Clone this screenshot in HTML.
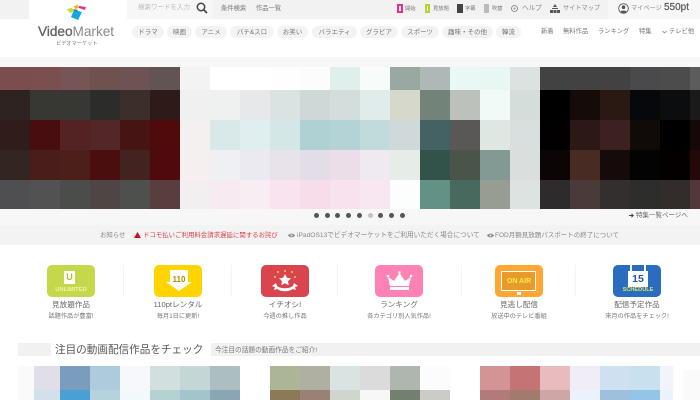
<!DOCTYPE html>
<html lang="ja"><head><meta charset="utf-8"><title>VideoMarket</title>
<style>
html,body{margin:0;padding:0;background:#fff}
body{width:700px;height:400px;overflow:hidden;position:relative;font-family:"Liberation Sans","Noto Sans CJK JP",sans-serif;color:#777}
.a{position:absolute}
.t{position:absolute;white-space:nowrap;line-height:12px;height:12px}
.c{transform:translateX(-50%)}
.p{position:absolute;top:26px;height:12px;line-height:13px;border-radius:6px;background:#f3f3f3;font-size:6.5px;text-align:center;color:#777;white-space:nowrap}
.tile{position:absolute;top:265px;width:48px;height:32px;border-radius:5px;overflow:hidden}
.div{position:absolute;top:265px;width:1px;height:32px;background:#f3f3f3}
.l1{font-size:7.6px;color:#666;top:299px}
.l2{font-size:6.2px;color:#777;top:311px}
.dot{position:absolute;top:213px;width:5px;height:5px;border-radius:50%;background:#555}
svg{display:block}
</style></head><body>

<div class="a" style="left:0;top:0;width:700px;height:19px;background:#f2f2f2"></div>
<div class="a" style="left:29px;top:0;width:98px;height:19px;background:#fff"></div>
<div class="a" style="left:127px;top:0;width:86px;height:19px;background:#f7f7f7"></div>
<div class="a" style="left:608px;top:0;width:92px;height:19px;background:#f7f7f7"></div>

<svg class="a" style="left:66px;top:4px" width="22" height="17" viewBox="0 0 22 17">
<path d="M1 5l5-1 2 3-4 2z" fill="#c9d92e"/><path d="M8 2l4-1 1 3-4 1z" fill="#f7a92b"/><path d="M13 2l7 1-1 3-6-2z" fill="#e8318a"/>
<path d="M8 6l8 2-4 8-7-3z" fill="#14a8e0"/><path d="M7 5l5 1-2 2z" fill="#0d8f8a"/></svg>
<div class="t" style="left:38px;top:25px;font-size:13.6px;line-height:14px;height:14px;color:#888"><span style="color:#666;-webkit-text-stroke:.35px #666">Video</span>Market</div>
<div class="t" style="left:56px;top:38px;font-size:5.2px;color:#777">ビデオマーケット</div>

<div class="t" style="left:138px;top:2px;font-size:6.5px;color:#bbb">検索ワードを入力</div>
<svg class="a" style="left:196px;top:2px" width="12" height="12" viewBox="0 0 12 12"><circle cx="5" cy="5" r="3.7" fill="none" stroke="#444" stroke-width="1.5"/><path d="M8 8l3 3" stroke="#444" stroke-width="1.7"/></svg>
<div class="t" style="left:221px;top:3px;font-size:6.3px;color:#777">条件検索</div>
<div class="t" style="left:256px;top:3px;font-size:6.3px;color:#777">作品一覧</div>

<div class="a" style="left:397px;top:4px;width:6px;height:9px;background:#ee2a8a"></div><div class="a" style="left:399px;top:6px;width:2px;height:5px;background:#fff"></div>
<div class="t" style="left:405px;top:3px;font-size:5.3px;color:#777">開始</div>
<div class="a" style="left:425px;top:4px;width:5px;height:9px;background:#b9d02e"></div><div class="a" style="left:427px;top:6px;width:1px;height:5px;background:#fff"></div>
<div class="t" style="left:433px;top:3px;font-size:5.3px;color:#777">見放題</div>
<div class="a" style="left:457px;top:4px;width:6px;height:9px;background:#444"></div>
<div class="t" style="left:465px;top:3px;font-size:5.3px;color:#777">字幕</div>
<div class="a" style="left:484px;top:4px;width:5px;height:9px;background:#bbb"></div>
<div class="t" style="left:492px;top:3px;font-size:5.3px;color:#777">吹替</div>
<svg class="a" style="left:511px;top:5px" width="7" height="7" viewBox="0 0 7 7"><circle cx="3.5" cy="3.5" r="3" fill="none" stroke="#777" stroke-width=".8"/><circle cx="3.5" cy="3.5" r="1" fill="#999"/></svg>
<div class="t" style="left:522px;top:3px;font-size:6.6px;color:#888">ヘルプ</div>
<svg class="a" style="left:550px;top:4px" width="10" height="9" viewBox="0 0 10 9"><path d="M5 0l2 3H3zM2 4h6v1H2zM0 6h3v3H0zM3.5 6h3v3h-3zM7 6h3v3H7z" fill="#555"/></svg>
<div class="t" style="left:563px;top:3px;font-size:6.2px;color:#888">サイトマップ</div>
<svg class="a" style="left:618px;top:3px" width="11" height="11" viewBox="0 0 11 11"><circle cx="5.5" cy="5.5" r="4.8" fill="none" stroke="#555" stroke-width=".9"/><circle cx="5.5" cy="4.2" r="1.8" fill="#555"/><path d="M2.3 9c.6-2 5.8-2 6.4 0-1.5 1.3-4.900 1.3-6.4 0z" fill="#555"/></svg>
<div class="t" style="left:631px;top:3px;font-size:6.2px;color:#888">マイページ</div>
<div class="t" style="left:664px;top:2px;font-size:10px;color:#555;-webkit-text-stroke:.2px #555">550pt</div>

<div class="p" style="left:132px;width:32px">ドラマ</div>
<div class="p" style="left:167px;width:25px">映画</div>
<div class="p" style="left:195px;width:32px">アニメ</div>
<div class="p" style="left:230px;width:44px">パチ&amp;スロ</div>
<div class="p" style="left:277px;width:31px">お笑い</div>
<div class="p" style="left:312px;width:45px">バラエティ</div>
<div class="p" style="left:360px;width:38px">グラビア</div>
<div class="p" style="left:401px;width:38px">スポーツ</div>
<div class="p" style="left:442px;width:51px">趣味・その他</div>
<div class="p" style="left:496px;width:25px">韓流</div>

<div class="t" style="left:541px;top:26px;font-size:6.3px;color:#777">新着</div>
<div class="t" style="left:563px;top:26px;font-size:6.3px;color:#777">無料作品</div>
<div class="t" style="left:598px;top:26px;font-size:6.3px;color:#777">ランキング</div>
<div class="t" style="left:639px;top:26px;font-size:6.3px;color:#777">特集</div>
<svg class="a" style="left:662px;top:30px" width="5" height="4" viewBox="0 0 5 4"><path d="M.5 1l2 2 2-2" fill="none" stroke="#777" stroke-width=".7"/></svg>
<div class="t" style="left:669px;top:26px;font-size:6.3px;color:#777">テレビ他</div>

<div class="a" style="left:0;top:57px;width:700px;height:10px;background:#f7f7f7"></div>
<div class="a" style="left:0;top:209px;width:700px;height:16px;background:#f7f7f7"></div>

<svg class="a" style="left:0;top:67px" width="700" height="142" shape-rendering="crispEdges">
<g>
<rect x="0" y="0" width="30" height="23" fill="#7a4d4f"/><rect x="30" y="0" width="30" height="23" fill="#7b4e50"/><rect x="60" y="0" width="30" height="23" fill="#775556"/><rect x="90" y="0" width="30" height="23" fill="#6f5150"/><rect x="120" y="0" width="30" height="23" fill="#6e5354"/><rect x="150" y="0" width="30" height="23" fill="#635454"/><rect x="180" y="0" width="30" height="23" fill="#f3f3f3"/><rect x="210" y="0" width="30" height="23" fill="#ffffff"/><rect x="240" y="0" width="30" height="23" fill="#ffffff"/><rect x="270" y="0" width="30" height="23" fill="#fefefe"/><rect x="300" y="0" width="30" height="23" fill="#fcfcfc"/><rect x="330" y="0" width="30" height="23" fill="#dff0ec"/><rect x="360" y="0" width="30" height="23" fill="#f7fcfb"/><rect x="390" y="0" width="30" height="23" fill="#99a9a2"/><rect x="420" y="0" width="30" height="23" fill="#aeb9b7"/><rect x="450" y="0" width="30" height="23" fill="#e9f7f5"/><rect x="480" y="0" width="30" height="23" fill="#e8f7f3"/><rect x="510" y="0" width="30" height="23" fill="#dbe2e1"/><rect x="540" y="0" width="30" height="23" fill="#424242"/><rect x="570" y="0" width="30" height="23" fill="#424242"/><rect x="600" y="0" width="30" height="23" fill="#424242"/><rect x="630" y="0" width="30" height="23" fill="#4a4a4c"/><rect x="660" y="0" width="30" height="23" fill="#4c4c4c"/><rect x="690" y="0" width="10" height="23" fill="#5c5c5c"/>
</g>
<g>
<rect x="0" y="23" width="30" height="30" fill="#2e2320"/><rect x="30" y="23" width="30" height="30" fill="#373734"/><rect x="60" y="23" width="30" height="30" fill="#373734"/><rect x="90" y="23" width="30" height="30" fill="#2c2c2a"/><rect x="120" y="23" width="30" height="30" fill="#3c2e2a"/><rect x="150" y="23" width="30" height="30" fill="#2e1a18"/><rect x="180" y="23" width="30" height="30" fill="#f1f0f1"/><rect x="210" y="23" width="30" height="30" fill="#eff0f0"/><rect x="240" y="23" width="30" height="30" fill="#e6e8e9"/><rect x="270" y="23" width="30" height="30" fill="#dbe3e2"/><rect x="300" y="23" width="30" height="30" fill="#ced8d6"/><rect x="330" y="23" width="30" height="30" fill="#d3dddb"/><rect x="360" y="23" width="30" height="30" fill="#dfecea"/><rect x="390" y="23" width="30" height="30" fill="#d7d8cc"/><rect x="420" y="23" width="30" height="30" fill="#72847a"/><rect x="450" y="23" width="30" height="30" fill="#bdc1bb"/><rect x="480" y="23" width="30" height="30" fill="#f1faf7"/><rect x="510" y="23" width="30" height="30" fill="#d5dddb"/><rect x="540" y="23" width="30" height="30" fill="#000000"/><rect x="570" y="23" width="30" height="30" fill="#150b09"/><rect x="600" y="23" width="30" height="30" fill="#2a1913"/><rect x="630" y="23" width="30" height="30" fill="#06080b"/><rect x="660" y="23" width="30" height="30" fill="#0c0d0e"/><rect x="690" y="23" width="10" height="30" fill="#1a1a1a"/>
</g>
<g>
<rect x="0" y="53" width="30" height="30" fill="#2f1c1b"/><rect x="30" y="53" width="30" height="30" fill="#470d0f"/><rect x="60" y="53" width="30" height="30" fill="#532324"/><rect x="90" y="53" width="30" height="30" fill="#532727"/><rect x="120" y="53" width="30" height="30" fill="#471414"/><rect x="150" y="53" width="30" height="30" fill="#4f0b0c"/><rect x="180" y="53" width="30" height="30" fill="#f4f0f0"/><rect x="210" y="53" width="30" height="30" fill="#d9e9ea"/><rect x="240" y="53" width="30" height="30" fill="#e1eeef"/><rect x="270" y="53" width="30" height="30" fill="#d4e7e7"/><rect x="300" y="53" width="30" height="30" fill="#b0d1d3"/><rect x="330" y="53" width="30" height="30" fill="#b3d3d6"/><rect x="360" y="53" width="30" height="30" fill="#c1dbdd"/><rect x="390" y="53" width="30" height="30" fill="#d0d9da"/><rect x="420" y="53" width="30" height="30" fill="#446263"/><rect x="450" y="53" width="30" height="30" fill="#5a5856"/><rect x="480" y="53" width="30" height="30" fill="#dfe7e2"/><rect x="510" y="53" width="30" height="30" fill="#d9dfde"/><rect x="540" y="53" width="30" height="30" fill="#020001"/><rect x="570" y="53" width="30" height="30" fill="#2c1814"/><rect x="600" y="53" width="30" height="30" fill="#3c2120"/><rect x="630" y="53" width="30" height="30" fill="#100b09"/><rect x="660" y="53" width="30" height="30" fill="#010000"/><rect x="690" y="53" width="10" height="30" fill="#150808"/>
</g>
<g>
<rect x="0" y="83" width="30" height="30" fill="#322522"/><rect x="30" y="83" width="30" height="30" fill="#4b1d1a"/><rect x="60" y="83" width="30" height="30" fill="#4d1f1b"/><rect x="90" y="83" width="30" height="30" fill="#4a0e0f"/><rect x="120" y="83" width="30" height="30" fill="#42231f"/><rect x="150" y="83" width="30" height="30" fill="#4e0a0c"/><rect x="180" y="83" width="30" height="30" fill="#f5f0ef"/><rect x="210" y="83" width="30" height="30" fill="#eff0f3"/><rect x="240" y="83" width="30" height="30" fill="#ebeaf1"/><rect x="270" y="83" width="30" height="30" fill="#e8e3eb"/><rect x="300" y="83" width="30" height="30" fill="#e3dde8"/><rect x="330" y="83" width="30" height="30" fill="#ebdee8"/><rect x="360" y="83" width="30" height="30" fill="#efeaf1"/><rect x="390" y="83" width="30" height="30" fill="#e6ece8"/><rect x="420" y="83" width="30" height="30" fill="#31534a"/><rect x="450" y="83" width="30" height="30" fill="#4b5448"/><rect x="480" y="83" width="30" height="30" fill="#829994"/><rect x="510" y="83" width="30" height="30" fill="#dadfde"/><rect x="540" y="83" width="30" height="30" fill="#0b0605"/><rect x="570" y="83" width="30" height="30" fill="#482c23"/><rect x="600" y="83" width="30" height="30" fill="#160b0b"/><rect x="630" y="83" width="30" height="30" fill="#030303"/><rect x="660" y="83" width="30" height="30" fill="#040000"/><rect x="690" y="83" width="10" height="30" fill="#250808"/>
</g>
<g>
<rect x="0" y="113" width="30" height="29" fill="#4f4f52"/><rect x="30" y="113" width="30" height="29" fill="#525252"/><rect x="60" y="113" width="30" height="29" fill="#4b4d4a"/><rect x="90" y="113" width="30" height="29" fill="#4f4544"/><rect x="120" y="113" width="30" height="29" fill="#4e504d"/><rect x="150" y="113" width="30" height="29" fill="#583e3e"/><rect x="180" y="113" width="30" height="29" fill="#f1eff0"/><rect x="210" y="113" width="30" height="29" fill="#f7ebf1"/><rect x="240" y="113" width="30" height="29" fill="#f8edf3"/><rect x="270" y="113" width="30" height="29" fill="#f9e3ef"/><rect x="300" y="113" width="30" height="29" fill="#f7dcea"/><rect x="330" y="113" width="30" height="29" fill="#f7e2ed"/><rect x="360" y="113" width="30" height="29" fill="#f8e7f0"/><rect x="390" y="113" width="30" height="29" fill="#fcfefd"/><rect x="420" y="113" width="30" height="29" fill="#629186"/><rect x="450" y="113" width="30" height="29" fill="#48695d"/><rect x="480" y="113" width="30" height="29" fill="#979d92"/><rect x="510" y="113" width="30" height="29" fill="#dce3e1"/><rect x="540" y="113" width="30" height="29" fill="#2d2b2b"/><rect x="570" y="113" width="30" height="29" fill="#4b3a3a"/><rect x="600" y="113" width="30" height="29" fill="#322f2e"/><rect x="630" y="113" width="30" height="29" fill="#2d2d2c"/><rect x="660" y="113" width="30" height="29" fill="#322c2a"/><rect x="690" y="113" width="10" height="29" fill="#523838"/>
</g>
</svg>

<div class="dot" style="left:313.5px"></div><div class="dot" style="left:324.5px"></div><div class="dot" style="left:335px"></div><div class="dot" style="left:345.5px"></div><div class="dot" style="left:356.5px"></div><div class="dot" style="left:367.5px;background:#c4c4c4"></div><div class="dot" style="left:378px"></div><div class="dot" style="left:389px"></div><div class="dot" style="left:400px"></div>
<svg class="a" style="left:629px;top:213px" width="5" height="5" viewBox="0 0 5 5"><path d="M0 2h2.5V.3L5 2.500 2.500 4.700V3H0z" fill="#444"/></svg>
<div class="t" style="left:636px;top:210px;font-size:6.5px;color:#666">特集一覧ページへ</div>

<div class="a" style="left:0;top:225px;width:700px;height:20px;background:#f3f3f3"></div>
<div class="t" style="left:100px;top:230px;font-size:6.4px;color:#888">お知らせ</div>
<svg class="a" style="left:134px;top:232px" width="7" height="6" viewBox="0 0 7 6"><path d="M3.500 0L7 6H0z" fill="#c8141e"/></svg>
<div class="t" style="left:143px;top:230px;font-size:6.43px;color:#d9434a">ドコモ払いご利用料金請求遅延に関するお詫び</div>
<svg class="a" style="left:288px;top:233px" width="7" height="5" viewBox="0 0 7 5"><path d="M0 2.500C2 0 5 0 7 2.500 5 5 2 5 0 2.500z" fill="#888"/><circle cx="3.500" cy="2.500" r="1" fill="#eee"/></svg>
<div class="t" style="left:297px;top:230px;font-size:6.65px;color:#888">iPadOS13でビデオマーケットをご利用いただく場合について</div>
<svg class="a" style="left:487px;top:233px" width="7" height="5" viewBox="0 0 7 5"><path d="M0 2.500C2 0 5 0 7 2.500 5 5 2 5 0 2.500z" fill="#888"/><circle cx="3.500" cy="2.500" r="1" fill="#eee"/></svg>
<div class="t" style="left:495px;top:230px;font-size:6.5px;color:#888">FOD月額見放題パスポートの終了について</div>

<div class="div" style="left:123px"></div><div class="div" style="left:231px"></div><div class="div" style="left:337px"></div><div class="div" style="left:461px"></div><div class="div" style="left:575px"></div>

<div class="tile" style="left:47px;background:#c5d74a">
<div class="a" style="left:17px;top:6px;width:11px;height:13px;background:#fff;color:#a9bd2c;font-size:9px;font-weight:bold;line-height:13px;text-align:center">U</div>
<div class="a" style="left:0;top:21px;width:48px;text-align:center;font-size:5.8px;line-height:8px;font-weight:bold;color:#eef5a8">UNLIMITED</div>
</div>
<div class="tile" style="left:154px;background:#ffd400">
<svg class="a" style="left:12px;top:5px" width="26" height="21" viewBox="0 0 26 21"><path d="M4 0h18v12h4L13 21 0 12h4z" fill="#fff"/></svg>
<div class="a" style="left:1px;top:9px;width:48px;text-align:center;font-size:8px;line-height:12px;font-weight:bold;color:#b38a00">110</div>
</div>
<div class="tile" style="left:261px;background:#d9444f">
<svg class="a" style="left:0;top:0" width="48" height="32" viewBox="0 0 48 32">
<path d="M24 9l1.900 3.700 4.100.600-3 2.900.700 4.100-3.700-2-3.700 2 .700-4.100-3-2.900 4.100-.600z" fill="#fff"/>
<path d="M11 21l4-3 1 3c4 3 12 3 16 0l1-3 4 3-3 1 1 3-3-1c-5 3-11 3-16 0l-3 1 1-3z" fill="#fff"/>
<circle cx="17" cy="7" r="1" fill="#f7d13a"/><circle cx="24" cy="6" r="1" fill="#f7d13a"/><circle cx="31" cy="7" r="1" fill="#f7d13a"/><circle cx="14" cy="12" r="1" fill="#f7d13a"/><circle cx="34" cy="12" r="1" fill="#f7d13a"/></svg>
</div>
<div class="tile" style="left:375px;background:#ff82b4">
<svg class="a" style="left:0;top:0" width="48" height="32" viewBox="0 0 48 32">
<path d="M15 21l-2-9 6 4 5.500-8 5.500 8 6-4-2 9z" fill="#fff"/><rect x="15" y="22" width="19" height="3" fill="#fff"/>
<circle cx="13" cy="11" r="1.300" fill="#fff"/><circle cx="24.500" cy="7.500" r="1.300" fill="#fff"/><circle cx="36" cy="11" r="1.300" fill="#fff"/></svg>
</div>
<div class="tile" style="left:495px;background:#ffa733">
<div class="a" style="left:6px;top:6px;width:33px;height:18px;background:#e99a2c;border:1.500px solid #fff"></div>
<div class="a" style="left:22px;top:27px;width:4px;height:3px;background:#fff"></div>
<div class="a" style="left:0;top:11px;width:48px;text-align:center;font-size:7px;line-height:12px;font-weight:bold;color:#ffe93c">ON AIR</div>
</div>
<div class="tile" style="left:613px;background:#2a6cc0">
<div class="a" style="left:15px;top:6px;width:20px;height:16px;background:#fff;color:#1f5aa6;font-size:10.5px;font-weight:bold;line-height:16px;text-align:center">15</div>
<div class="a" style="left:17px;top:0;width:2px;height:6px;background:#fff"></div><div class="a" style="left:31px;top:0;width:2px;height:6px;background:#fff"></div>
<div class="a" style="left:1px;top:21px;width:48px;text-align:center;font-size:5.6px;line-height:8px;font-weight:bold;color:#d9ea5a">SCHEDULE</div>
</div>

<div class="t c l1" style="left:71px">見放題作品</div><div class="t c l2" style="left:71px">話題作品が豊富!</div>
<div class="t c l1" style="left:178px">110ptレンタル</div><div class="t c l2" style="left:178px">毎月1日に更新!</div>
<div class="t c l1" style="left:285px">イチオシ!</div><div class="t c l2" style="left:285px">今週の推し作品</div>
<div class="t c l1" style="left:399px">ランキング</div><div class="t c l2" style="left:399px">各カテゴリ別人気作品!</div>
<div class="t c l1" style="left:519px">見逃し配信</div><div class="t c l2" style="left:519px">放送中のテレビ番組</div>
<div class="t c l1" style="left:637px">配信予定作品</div><div class="t c l2" style="left:637px">来月の作品をチェック!</div>

<div class="a" style="left:18px;top:343px;width:33px;height:13px;background:#f1f1f1"></div>
<div class="t" style="left:55px;top:343px;height:15px;line-height:15px;font-size:10.6px;color:#555">注目の動画配信作品をチェック</div>
<div class="a" style="left:211px;top:343px;width:489px;height:13px;background:#f1f1f1"></div>
<div class="t" style="left:215px;top:345px;font-size:6.7px;color:#777">今注目の話題の動画作品をご紹介!</div>

<svg class="a" style="left:0;top:366px" width="700" height="34" shape-rendering="crispEdges">
<rect x="18" y="0" width="16" height="34" fill="#fafafa"/>
<rect x="34" y="0" width="26" height="24" fill="#e0dfe9"/><rect x="60" y="0" width="30" height="24" fill="#7a9dbf"/><rect x="90" y="0" width="30" height="24" fill="#aecbdd"/><rect x="120" y="0" width="30" height="24" fill="#f7f8fb"/><rect x="150" y="0" width="30" height="24" fill="#d2dfdf"/><rect x="180" y="0" width="30" height="24" fill="#c4d6d6"/><rect x="210" y="0" width="30" height="24" fill="#acbec2"/>
<rect x="34" y="24" width="26" height="10" fill="#d2e0ec"/><rect x="60" y="24" width="30" height="10" fill="#4ba0d3"/><rect x="90" y="24" width="30" height="10" fill="#b4d3dc"/><rect x="120" y="24" width="30" height="10" fill="#f2f8fb"/><rect x="150" y="24" width="30" height="10" fill="#b3d2d1"/><rect x="180" y="24" width="30" height="10" fill="#a3c4ca"/><rect x="210" y="24" width="30" height="10" fill="#8aa5b3"/>
<rect x="270" y="0" width="30" height="24" fill="#acb596"/><rect x="300" y="0" width="30" height="24" fill="#b0b0a2"/><rect x="330" y="0" width="30" height="24" fill="#d9e3e1"/><rect x="360" y="0" width="30" height="24" fill="#dbdbdb"/><rect x="390" y="0" width="30" height="24" fill="#afb5af"/><rect x="420" y="0" width="30" height="24" fill="#fbfcfb"/>
<rect x="270" y="24" width="30" height="10" fill="#8b7a55"/><rect x="300" y="24" width="30" height="10" fill="#9a8075"/><rect x="330" y="24" width="30" height="10" fill="#d0d5cd"/><rect x="360" y="24" width="30" height="10" fill="#f7f8f5"/><rect x="390" y="24" width="30" height="10" fill="#72806f"/><rect x="420" y="24" width="30" height="10" fill="#cbccc7"/>
<rect x="480" y="0" width="30" height="24" fill="#d49394"/><rect x="510" y="0" width="30" height="24" fill="#c57476"/><rect x="540" y="0" width="30" height="24" fill="#e8bcbf"/><rect x="570" y="0" width="30" height="24" fill="#f1edf6"/><rect x="600" y="0" width="30" height="24" fill="#cfe0f0"/><rect x="630" y="0" width="30" height="24" fill="#c9e0ee"/><rect x="660" y="0" width="13" height="24" fill="#f1f5fb"/>
<rect x="480" y="24" width="30" height="10" fill="#b27a7a"/><rect x="510" y="24" width="30" height="10" fill="#a37a6e"/><rect x="540" y="24" width="30" height="10" fill="#cfa6a6"/><rect x="570" y="24" width="30" height="10" fill="#ebf2fb"/><rect x="600" y="24" width="30" height="10" fill="#9fc0dc"/><rect x="630" y="24" width="30" height="10" fill="#93c5e6"/><rect x="660" y="24" width="13" height="10" fill="#ebf2fb"/>
<rect x="683" y="4" width="17" height="30" fill="#fafafa"/>
</svg>
</body></html>
